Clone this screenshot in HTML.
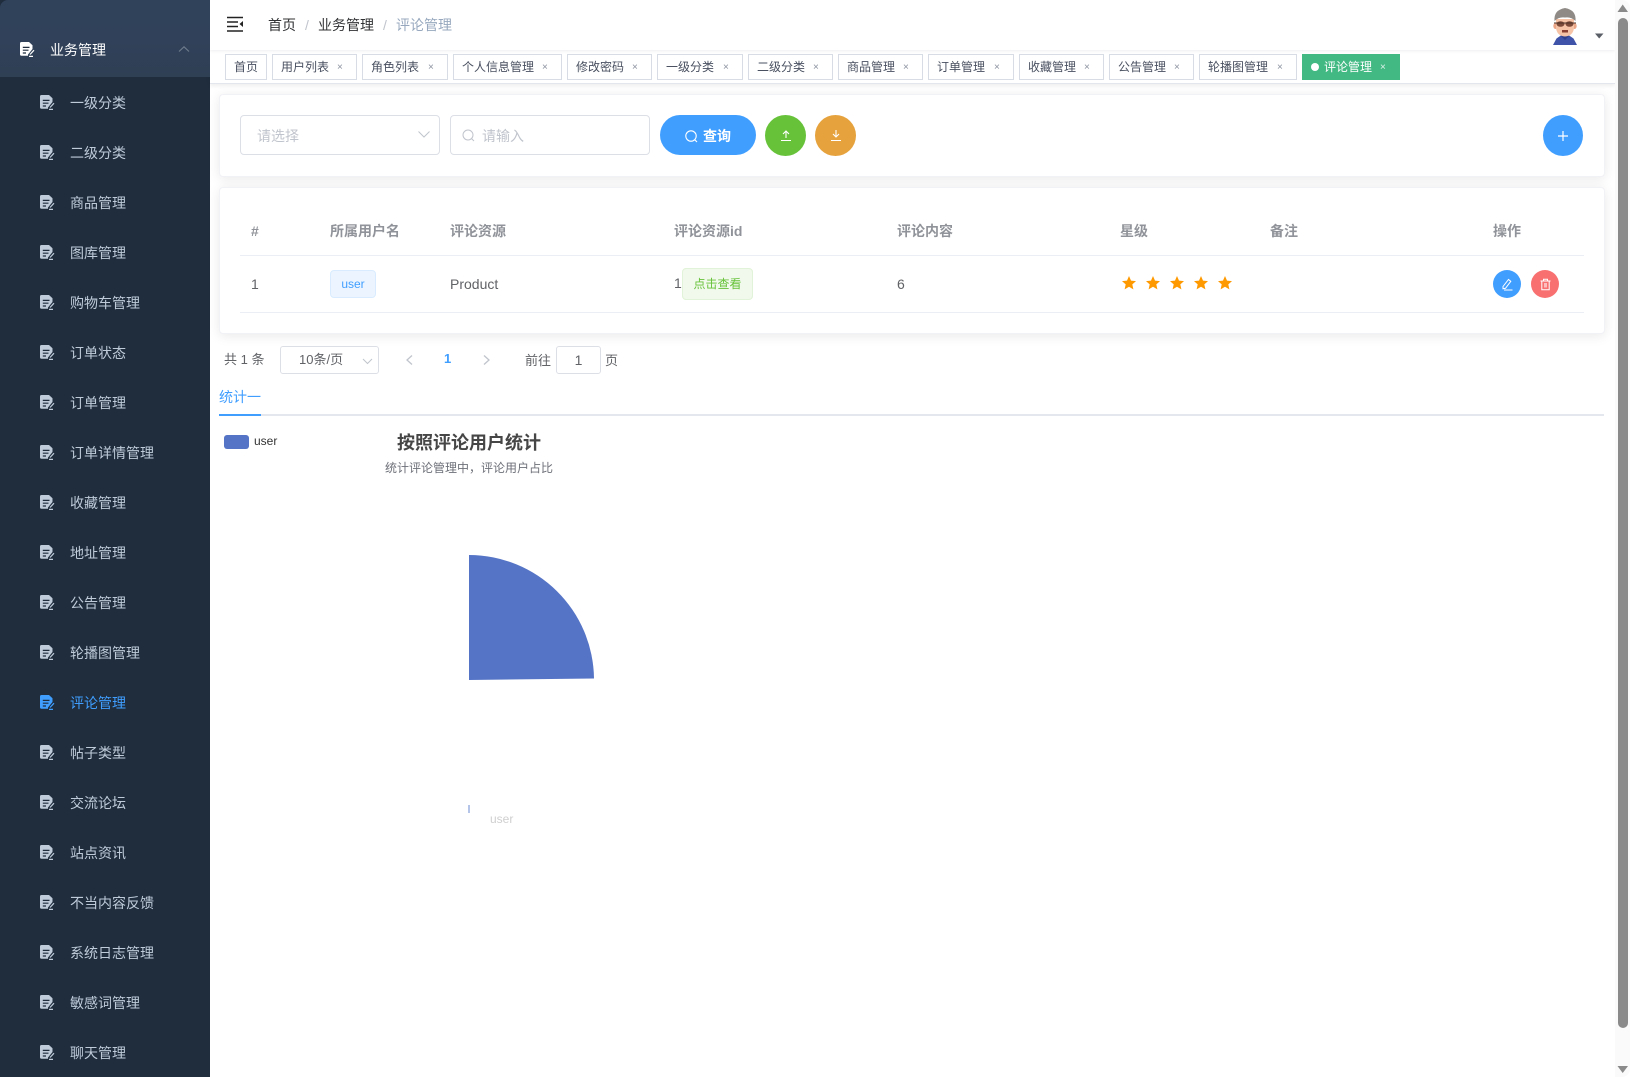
<!DOCTYPE html>
<html lang="zh"><head><meta charset="utf-8"><title>评论管理</title>
<style>
*{box-sizing:border-box}
html,body{margin:0;padding:0;width:1630px;height:1077px;overflow:hidden;background:#fff;font-family:"Liberation Sans","Noto Sans CJK SC",sans-serif;font-size:14px;color:#606266}
.a{position:absolute;white-space:nowrap}
#side{left:0;top:0;width:210px;height:1077px;background:#1f2d3d;overflow:hidden}
#sideTop{left:0;top:0;width:210px;height:77px;background:linear-gradient(180deg,#30415a 0%,#304159 55%,#2f3f54 100%);border-top-left-radius:8px;z-index:6}
.mi{position:absolute;left:70px;line-height:20px;height:20px;color:#bfcbd9;font-size:14px}
.ic{position:absolute;left:40px;width:15px;height:15px;color:#bfcbd9}
.tag{position:absolute;top:54px;height:26px;line-height:24px;border:1px solid #d8dce5;font-size:12px;color:#495060;background:#fff;padding-left:8px}
.tag i{position:absolute;font-style:normal;font-size:10px;color:#8a919e;line-height:26px;top:0}
.card{position:absolute;left:219px;width:1386px;background:#fff;border:1px solid #f1f2f6;border-radius:4px;box-shadow:0 2px 12px rgba(0,0,0,.09)}
.inp{position:absolute;height:40px;top:115px;border:1px solid #dcdfe6;border-radius:4px;background:#fff;color:#c0c4cc;line-height:40px;font-size:14px}
.circ{position:absolute;border-radius:50%}
.th{position:absolute;top:221px;line-height:20px;font-size:14px;font-weight:bold;color:#909399}
.td{position:absolute;line-height:20px;font-size:14px;color:#606266}
.line{position:absolute;left:240px;width:1344px;height:1px;background:#ebeef5}
</style></head>
<body>
<svg width="0" height="0" style="position:absolute"><defs>
<symbol id="doc" viewBox="0 0 15 15"><path fill="currentColor" d="M1.5 0H9L12.5 3.2V7L8 12.5V13.8H1.5Q0 13.8 0 12.3V1.5Q0 0 1.5 0Z"/><path fill="none" stroke="#1f2d3d" stroke-width="1.2" d="M2.8 5.4H9.5M2.8 8.2H8.5M2.8 11H6"/><path fill="none" stroke="currentColor" stroke-width="1.2" d="M9 14.4H13M10 12.5L14 8.2"/></symbol>
</defs></svg>

<div class="a" id="side">
 <div class="a" id="sideTop"></div>
 <svg class="ic" style="left:20px;top:42px;z-index:7;color:#fff"><use href="#doc"/></svg>
 <div class="mi" style="left:50px;top:40px;color:#fff;z-index:7">业务管理</div>
 <svg class="a" style="left:178px;top:45px;z-index:7" width="12" height="8"><path d="M1 6.5L6 1.8L11 6.5" fill="none" stroke="#6f7c8d" stroke-width="1.1"/></svg>

 <svg class="ic" style="top:95px"><use href="#doc"/></svg><div class="mi" style="top:93px">一级分类</div>
 <svg class="ic" style="top:145px"><use href="#doc"/></svg><div class="mi" style="top:143px">二级分类</div>
 <svg class="ic" style="top:195px"><use href="#doc"/></svg><div class="mi" style="top:193px">商品管理</div>
 <svg class="ic" style="top:245px"><use href="#doc"/></svg><div class="mi" style="top:243px">图库管理</div>
 <svg class="ic" style="top:295px"><use href="#doc"/></svg><div class="mi" style="top:293px">购物车管理</div>
 <svg class="ic" style="top:345px"><use href="#doc"/></svg><div class="mi" style="top:343px">订单状态</div>
 <svg class="ic" style="top:395px"><use href="#doc"/></svg><div class="mi" style="top:393px">订单管理</div>
 <svg class="ic" style="top:445px"><use href="#doc"/></svg><div class="mi" style="top:443px">订单详情管理</div>
 <svg class="ic" style="top:495px"><use href="#doc"/></svg><div class="mi" style="top:493px">收藏管理</div>
 <svg class="ic" style="top:545px"><use href="#doc"/></svg><div class="mi" style="top:543px">地址管理</div>
 <svg class="ic" style="top:595px"><use href="#doc"/></svg><div class="mi" style="top:593px">公告管理</div>
 <svg class="ic" style="top:645px"><use href="#doc"/></svg><div class="mi" style="top:643px">轮播图管理</div>
 <svg class="ic" style="top:695px;color:#409eff"><use href="#doc"/></svg><div class="mi" style="top:693px;color:#409eff">评论管理</div>
 <svg class="ic" style="top:745px"><use href="#doc"/></svg><div class="mi" style="top:743px">帖子类型</div>
 <svg class="ic" style="top:795px"><use href="#doc"/></svg><div class="mi" style="top:793px">交流论坛</div>
 <svg class="ic" style="top:845px"><use href="#doc"/></svg><div class="mi" style="top:843px">站点资讯</div>
 <svg class="ic" style="top:895px"><use href="#doc"/></svg><div class="mi" style="top:893px">不当内容反馈</div>
 <svg class="ic" style="top:945px"><use href="#doc"/></svg><div class="mi" style="top:943px">系统日志管理</div>
 <svg class="ic" style="top:995px"><use href="#doc"/></svg><div class="mi" style="top:993px">敏感词管理</div>
 <svg class="ic" style="top:1045px"><use href="#doc"/></svg><div class="mi" style="top:1043px">聊天管理</div>
</div>

<!-- cards go under tag bar shadow -->
<div class="card" style="top:94px;height:83px"></div>
<div class="card" style="top:187px;height:147px"></div>

<!-- tags bar -->
<div class="a" style="left:210px;top:50px;width:1405px;height:34px;background:#fff;border-bottom:1px solid #e4e6ee;box-shadow:0 2px 4px rgba(0,0,0,.07)"></div>
<!-- header -->
<div class="a" style="left:210px;top:0;width:1405px;height:50px;background:#fff;box-shadow:0 1px 3px rgba(0,21,41,.07)"></div>
<svg class="a" style="left:227px;top:16px" width="17" height="16"><path d="M0 1.5H16M0 6H11M0 10.5H11M0 15H16" stroke="#222" stroke-width="1.5" fill="none"/><path d="M16 5L12.5 8L16 11Z" fill="#222"/></svg>
<div class="a" style="left:268px;top:15px;line-height:20px;color:#303133">首页</div>
<div class="a" style="left:305px;top:15px;line-height:20px;color:#c0c4cc">/</div>
<div class="a" style="left:318px;top:15px;line-height:20px;color:#303133">业务管理</div>
<div class="a" style="left:383px;top:15px;line-height:20px;color:#c0c4cc">/</div>
<div class="a" style="left:396px;top:15px;line-height:20px;color:#97a8be">评论管理</div>

<!-- avatar -->
<svg class="a" style="left:1552px;top:7px" width="26" height="38" viewBox="0 0 26 38">
 <path d="M1 38L4.5 31.5Q8 29 9 28.5L13 32L17 28.5Q18 29 21.5 31.5L25 38Z" fill="#3f53a8"/>
 <path d="M9 29L13 33L17 29L16 27H10Z" fill="#2f3f8c"/>
 <ellipse cx="3.5" cy="19" rx="2.2" ry="3" fill="#eaa587"/><ellipse cx="22.5" cy="19" rx="2.2" ry="3" fill="#eaa587"/>
 <path d="M4 12H22V21Q21 29 13 29.5Q5 29 4 21Z" fill="#f7c3a6"/>
 <path d="M2.5 14Q1.5 3 13 1Q24.5 3 23.5 14Q19 9.5 13 10.5Q7 9.5 2.5 14Z" fill="#8f8a86"/>
 <ellipse cx="8.5" cy="17" rx="4" ry="2.8" fill="#7c4a38"/><ellipse cx="17.5" cy="17" rx="4" ry="2.8" fill="#7c4a38"/>
 <path d="M2 16H24" stroke="#4a332a" stroke-width="1"/>
 <path d="M10 23H16V25.5H10Z" fill="#8a3f30"/>
</svg>
<svg class="a" style="left:1595px;top:33px" width="9" height="6"><path d="M0 0.5H8.5L4.2 5.5Z" fill="#5a5e66"/></svg>

<div class="tag" style="left:225px;width:42px">首页</div>
<div class="tag" style="left:272px;width:85px">用户列表<i style="left:64px">×</i></div>
<div class="tag" style="left:362px;width:86px">角色列表<i style="left:65px">×</i></div>
<div class="tag" style="left:453px;width:109px">个人信息管理<i style="left:88px">×</i></div>
<div class="tag" style="left:567px;width:85px">修改密码<i style="left:64px">×</i></div>
<div class="tag" style="left:657px;width:86px">一级分类<i style="left:65px">×</i></div>
<div class="tag" style="left:748px;width:85px">二级分类<i style="left:64px">×</i></div>
<div class="tag" style="left:838px;width:85px">商品管理<i style="left:64px">×</i></div>
<div class="tag" style="left:928px;width:86px">订单管理<i style="left:65px">×</i></div>
<div class="tag" style="left:1019px;width:85px">收藏管理<i style="left:64px">×</i></div>
<div class="tag" style="left:1109px;width:85px">公告管理<i style="left:64px">×</i></div>
<div class="tag" style="left:1199px;width:98px">轮播图管理<i style="left:77px">×</i></div>
<div class="a" style="left:1302px;top:54px;width:98px;height:26px;background:#42b983"></div>
<div class="a" style="left:1311px;top:63px;width:8px;height:8px;border-radius:50%;background:#fff"></div>
<div class="a" style="left:1324px;top:55px;line-height:24px;font-size:12px;color:#fff">评论管理</div>
<div class="a" style="left:1380px;top:55px;line-height:26px;font-size:10px;color:#dff3ea">×</div>

<!-- card 1 -->
<div class="inp" style="left:240px;width:200px;padding-left:16px">请选择</div>
<svg class="a" style="left:417px;top:130px" width="14" height="9"><path d="M1.5 1.5L7 7L12.5 1.5" fill="none" stroke="#c0c4cc" stroke-width="1"/></svg>
<div class="inp" style="left:450px;width:200px;padding-left:31px">请输入</div>
<svg class="a" style="left:461px;top:128px" width="15" height="15"><circle cx="7" cy="7" r="5" fill="none" stroke="#c0c4cc" stroke-width="1"/><path d="M10.6 10.6L13 13" stroke="#c0c4cc" stroke-width="1"/></svg>
<div class="a" style="left:660px;top:115px;width:96px;height:40px;border-radius:20px;background:#409eff"></div>
<svg class="a" style="left:684px;top:129px" width="15" height="15"><circle cx="7" cy="7" r="5.2" fill="none" stroke="#fff" stroke-width="1.1"/><path d="M10.8 10.8L13 13" stroke="#fff" stroke-width="1.1"/></svg>
<div class="a" style="left:703px;top:126px;line-height:20px;color:#fff;font-weight:bold">查询</div>
<div class="circ" style="left:765px;top:115px;width:41px;height:41px;background:#67c23a"></div>
<svg class="a" style="left:779px;top:129px" width="14" height="13"><path d="M7 9V2M4 5L7 2L10 5M2 11.5H12" fill="none" stroke="#fff" stroke-width="1.1"/></svg>
<div class="circ" style="left:815px;top:115px;width:41px;height:41px;background:#e6a23c"></div>
<svg class="a" style="left:829px;top:129px" width="14" height="13"><path d="M7 1V8M4 5L7 8L10 5M2 11.5H12" fill="none" stroke="#fff" stroke-width="1.1"/></svg>
<div class="circ" style="left:1543px;top:115px;width:40px;height:41px;background:#409eff"></div>
<svg class="a" style="left:1556px;top:129px" width="14" height="14"><path d="M7 2V12M2 7H12" stroke="#fff" stroke-width="1.2" fill="none"/></svg>

<!-- card 2 -->
<div class="th" style="left:251px">#</div>
<div class="th" style="left:330px">所属用户名</div>
<div class="th" style="left:450px">评论资源</div>
<div class="th" style="left:674px">评论资源id</div>
<div class="th" style="left:897px">评论内容</div>
<div class="th" style="left:1120px">星级</div>
<div class="th" style="left:1270px">备注</div>
<div class="th" style="left:1493px">操作</div>
<div class="line" style="top:255px"></div>
<div class="line" style="top:312px"></div>
<div class="td" style="left:251px;top:274px">1</div>
<div class="a" style="left:330px;top:270px;width:46px;height:28px;line-height:26px;text-align:center;font-size:12px;color:#409eff;background:#ecf5ff;border:1px solid #d9ecff;border-radius:4px">user</div>
<div class="td" style="left:450px;top:274px">Product</div>
<div class="td" style="left:674px;top:273px">1</div>
<div class="a" style="left:682px;top:268px;width:71px;height:32px;line-height:30px;text-align:center;font-size:12px;color:#67c23a;background:#f0f9eb;border:1px solid #e1f3d8;border-radius:4px">点击查看</div>
<div class="td" style="left:897px;top:274px">6</div>
<svg class="a" style="left:1121px;top:275px" width="112" height="16" viewBox="0 0 112 16" fill="#ff9900">
 <path d="M8 1L10 5.6L15 6.1L11.3 9.4L12.4 14.4L8 11.8L3.6 14.4L4.7 9.4L1 6.1L6 5.6Z"/>
 <path transform="translate(24)" d="M8 1L10 5.6L15 6.1L11.3 9.4L12.4 14.4L8 11.8L3.6 14.4L4.7 9.4L1 6.1L6 5.6Z"/>
 <path transform="translate(48)" d="M8 1L10 5.6L15 6.1L11.3 9.4L12.4 14.4L8 11.8L3.6 14.4L4.7 9.4L1 6.1L6 5.6Z"/>
 <path transform="translate(72)" d="M8 1L10 5.6L15 6.1L11.3 9.4L12.4 14.4L8 11.8L3.6 14.4L4.7 9.4L1 6.1L6 5.6Z"/>
 <path transform="translate(96)" d="M8 1L10 5.6L15 6.1L11.3 9.4L12.4 14.4L8 11.8L3.6 14.4L4.7 9.4L1 6.1L6 5.6Z"/>
</svg>
<div class="circ" style="left:1493px;top:270px;width:28px;height:28px;background:#409eff"></div>
<svg class="a" style="left:1501px;top:278px" width="13" height="13"><path d="M2 8.5L7.5 1.5L9.8 3.3L4.5 10.3L2 10.8Z M3 12H11.5" fill="none" stroke="#fff" stroke-width="1"/></svg>
<div class="circ" style="left:1531px;top:270px;width:28px;height:28px;background:#f97070"></div>
<svg class="a" style="left:1539px;top:278px" width="13" height="13"><path d="M1.5 3H11.5M4.5 3V1.3H8.5V3M2.8 3V11.8H10.2V3" fill="none" stroke="#fff" stroke-width="1"/><rect x="5" y="5" width="3" height="4.5" fill="#fff" opacity=".55"/></svg>

<!-- pagination -->
<div class="a" style="left:224px;top:350px;line-height:20px;font-size:13px;color:#606266">共 1 条</div>
<div class="a" style="left:280px;top:346px;width:99px;height:28px;border:1px solid #dcdfe6;border-radius:3px;background:#fff;line-height:26px;font-size:13px;color:#606266;padding-left:18px">10条/页</div>
<svg class="a" style="left:362px;top:358px" width="11" height="7"><path d="M1 1L5.5 5.5L10 1" fill="none" stroke="#c0c4cc" stroke-width="1"/></svg>
<svg class="a" style="left:405px;top:354px" width="9" height="12"><path d="M7 1.5L2 6L7 10.5" fill="none" stroke="#c0c4cc" stroke-width="1.3"/></svg>
<div class="a" style="left:444px;top:349px;line-height:20px;font-size:13px;font-weight:bold;color:#409eff">1</div>
<svg class="a" style="left:482px;top:354px" width="9" height="12"><path d="M2 1.5L7 6L2 10.5" fill="none" stroke="#c0c4cc" stroke-width="1.3"/></svg>
<div class="a" style="left:525px;top:351px;line-height:20px;font-size:13px;color:#606266">前往</div>
<div class="a" style="left:556px;top:346px;width:45px;height:28px;border:1px solid #dcdfe6;border-radius:3px;background:#fff;line-height:26px;text-align:center;font-size:14px;color:#606266">1</div>
<div class="a" style="left:605px;top:351px;line-height:20px;font-size:13px;color:#606266">页</div>

<!-- tabs -->
<div class="a" style="left:219px;top:387px;line-height:20px;color:#409eff">统计一</div>
<div class="a" style="left:219px;top:414px;width:1385px;height:2px;background:#e4e7ed"></div>
<div class="a" style="left:219px;top:414px;width:42px;height:2px;background:#409eff"></div>

<!-- chart -->
<div class="a" style="left:224px;top:435px;width:25px;height:14px;border-radius:3px;background:#5574c6"></div>
<div class="a" style="left:254px;top:433px;line-height:16px;font-size:12px;color:#333">user</div>
<div class="a" style="left:397px;top:430px;line-height:26px;font-size:18px;font-weight:bold;color:#464646">按照评论用户统计</div>
<div class="a" style="left:385px;top:459px;line-height:18px;font-size:12px;color:#6e7079">统计评论管理中，评论用户占比</div>
<svg class="a" style="left:465px;top:550px" width="135" height="135"><path d="M4 5A125 125 0 0 1 129 128.5L4 130Z" fill="#5574c6"/></svg>
<div class="a" style="left:468px;top:805px;width:2px;height:8px;background:#b5c5ea"></div>
<div class="a" style="left:490px;top:811px;line-height:16px;font-size:12px;color:#cfcfcf">user</div>

<!-- scrollbar -->
<div class="a" style="left:1615px;top:0;width:15px;height:1077px;background:#fafafa;border-bottom-right-radius:8px;border-top-right-radius:8px"></div>
<svg class="a" style="left:1617px;top:4px" width="12" height="9"><path d="M5.7 0.5L11 8H0.5Z" fill="#8a8a8a"/></svg>
<div class="a" style="left:1618px;top:18px;width:10px;height:1010px;background:#8a8a8a;border-radius:5px"></div>
<svg class="a" style="left:1617px;top:1065px" width="12" height="9"><path d="M0.5 1H11L5.7 8Z" fill="#8a8a8a"/></svg>
</body></html>
